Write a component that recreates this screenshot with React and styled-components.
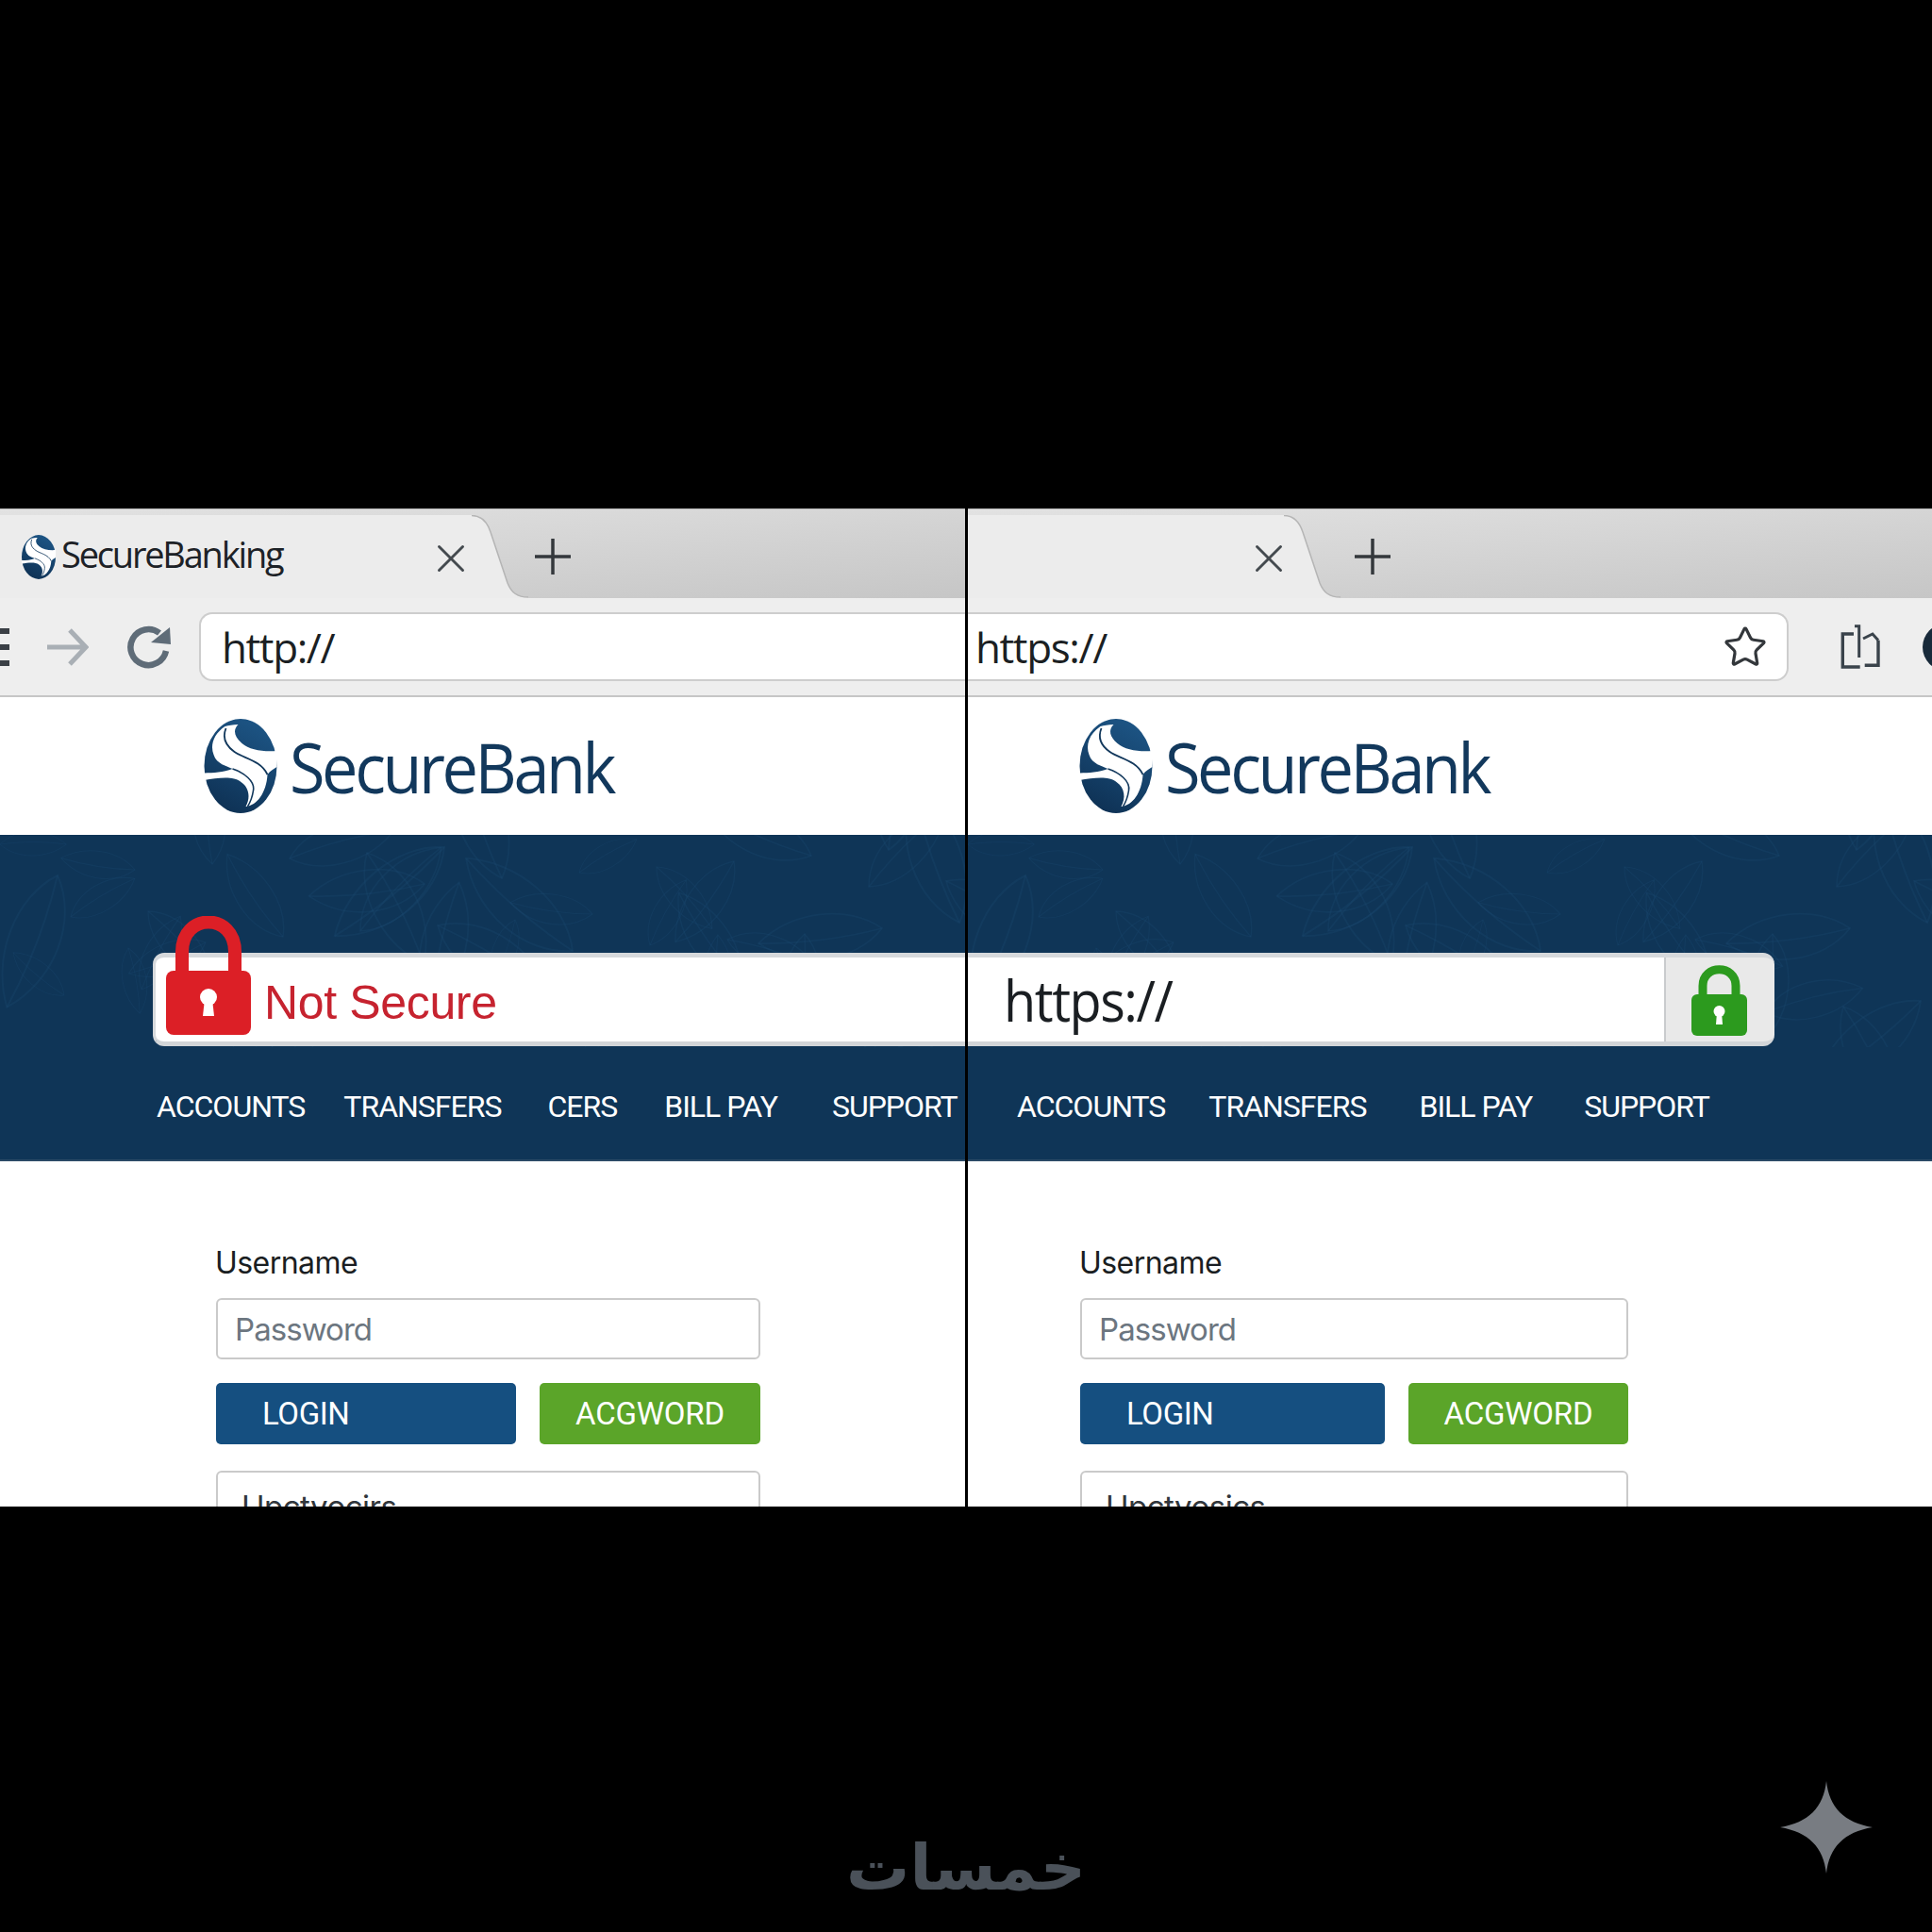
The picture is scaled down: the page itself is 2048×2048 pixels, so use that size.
import React from "react";
import styled, { createGlobalStyle } from "styled-components";
import { Star, X } from "lucide-react";

const GlobalStyle = createGlobalStyle`
  html, body {
    margin: 0;
    background: #000;
  }
  * {
    box-sizing: border-box;
  }
`;

const Page = styled.div`
  width: 2048px;
  height: 2048px;
  background: #000;
  padding-top: 539px;
  overflow: hidden;
`;

const Comparison = styled.div`
  display: grid;
  grid-template-columns: 1023px 1022px;
  column-gap: 3px;
  height: 1058px;
`;

const Pane = styled.section`
  display: flex;
  flex-direction: column;
  background: #fff;
  overflow: hidden;
  min-width: 0;
`;

const TabStrip = styled.div`
  display: flex;
  align-items: flex-end;
  height: 95px;
  flex: none;
  background: linear-gradient(175deg, #e2e2e2 0%, #d6d6d6 45%, #c6c6c6 100%);
  border-top: 1px solid #b9b9b9;
`;

const Tab = styled.div`
  display: flex;
  align-items: center;
  flex: none;
  width: ${props => props.$width}px;
  height: 88px;
  padding-left: 23px;
  background: #ececec;
`;

const TabLabel = styled.span`
  margin: -7px 0 0 6px;
  font: 400 38px "Open Sans", sans-serif;
  letter-spacing: -2.2px;
  color: #1d2227;
  white-space: nowrap;
`;

const Close = styled(X)`
  flex: none;
  margin-left: auto;
  margin-right: ${props => props.$right}px;
  margin-top: 4px;
  color: #444a4f;
`;

const TabEdge = styled.svg`
  flex: none;
  display: block;
`;

const PlusIcon = styled.svg`
  flex: none;
  align-self: center;
  margin-left: ${props => props.$left}px;
  margin-top: 6px;
`;

const Toolbar = styled.div`
  display: flex;
  align-items: center;
  flex: none;
  height: 105px;
  background: #eeeeee;
  border-bottom: 2px solid #c6c6c6;
`;

const Burger = styled.div`
  flex: none;
  width: 10px;
  height: 40px;
  background: repeating-linear-gradient(#3a3f45 0 6px, transparent 6px 17px);
`;

const NavIcon = styled.svg`
  flex: none;
  margin-left: ${props => props.$left}px;
`;

const UrlBar = styled.div`
  display: flex;
  align-items: center;
  flex: ${props => (props.$open ? "1" : "none")};
  width: ${props => (props.$width ? `${props.$width}px` : "auto")};
  height: 73px;
  margin-left: ${props => props.$left}px;
  padding-left: ${props => props.$pad}px;
  padding-right: 20px;
  background: #fff;
  border: 2px solid #cdcdcd;
  border-left: ${props => (props.$open ? "2px solid #cdcdcd" : "none")};
  border-right: ${props => (props.$open ? "none" : "2px solid #cdcdcd")};
  border-radius: ${props => (props.$open ? "14px 0 0 14px" : "0 14px 14px 0")};
`;

const UrlText = styled.span`
  font: 400 44px "Open Sans", sans-serif;
  letter-spacing: -1.4px;
  color: #1b1f23;
`;

const StarIcon = styled(Star)`
  margin-left: auto;
  color: #33373b;
`;

const Avatar = styled.div`
  flex: none;
  width: 50px;
  height: 50px;
  margin-left: 44px;
  border-radius: 50%;
  background: #182a3a;
`;

const BrandRow = styled.div`
  display: flex;
  align-items: center;
  flex: none;
  height: 146px;
  padding-left: ${props => props.$left}px;
  background: #fff;
`;

const BrandName = styled.span`
  margin-left: 13px;
  font: 400 74px "Open Sans", sans-serif;
  letter-spacing: -3.7px;
  color: #12385c;
  transform: scaleX(0.925);
  transform-origin: left center;
`;

const Band = styled.div`
  position: relative;
  display: flex;
  flex-direction: column;
  flex: none;
  height: 346px;
  padding-top: 125px;
  background: #0f3557;
  border-bottom: 2px solid #2b4a66;
`;

const BandTexture = styled.svg`
  position: absolute;
  top: 0;
  left: 0;
`;

const SecurityBar = styled.div`
  position: relative;
  display: flex;
  align-items: center;
  flex: none;
  height: 99px;
  margin-left: ${props => props.$left}px;
  width: ${props => props.$width}px;
  background: ${props => (props.$trailing ? "#e9e9e9" : "#fff")};
  border-top: 5px solid #d6d9dc;
  border-bottom: 5px solid #d2d5d8;
  border-left: ${props => (props.$trailing ? "none" : "3px solid #d6d9dc")};
  border-radius: ${props => (props.$trailing ? "0 12px 12px 0" : "12px 0 0 12px")};
`;

const BarLock = styled.svg`
  flex: none;
  align-self: flex-end;
  margin-left: 11px;
  margin-bottom: 7px;
`;

const Warning = styled.span`
  margin-left: 14px;
  margin-top: 6px;
  font: 400 50px "Liberation Sans", sans-serif;
  letter-spacing: -0.35px;
  color: #c6232f;
`;

const SecureField = styled.div`
  display: flex;
  align-items: center;
  flex: none;
  width: 740px;
  height: 100%;
  padding-left: 38px;
  background: #fff;
  border-right: 2px solid #c9cbcd;
`;

const SecureUrl = styled.span`
  font: 400 60px "Open Sans", sans-serif;
  letter-spacing: -1.6px;
  color: #1a1e22;
  transform: scaleX(0.93);
  transform-origin: left center;
`;

const LockCell = styled.div`
  display: flex;
  align-items: center;
  justify-content: center;
  flex: 1;
  height: 100%;
  padding-right: 2px;
`;

const NavRow = styled.nav`
  display: flex;
  align-items: center;
  flex: 1;
  padding-left: ${props => props.$left}px;
  padding-top: 7px;
`;

const NavLink = styled.span`
  margin-left: ${props => props.$gap}px;
  font: 400 32px Roboto, sans-serif;
  letter-spacing: -1px;
  color: #fff;
  white-space: nowrap;
`;

const Form = styled.div`
  display: flex;
  flex-direction: column;
  width: ${props => props.$width}px;
  margin-left: ${props => props.$left}px;
  padding-top: 88px;
`;

const FieldLabel = styled.label`
  height: 40px;
  margin-left: -1px;
  font: 400 32px Inter, sans-serif;
  letter-spacing: -0.55px;
  line-height: 40px;
  color: #1a1e22;
`;

const Field = styled.input`
  height: 65px;
  margin-top: 17px;
  padding: 0 18px;
  background: #fff;
  border: 2px solid #cacaca;
  border-radius: 6px;
  font: 400 33px Inter, sans-serif;
  letter-spacing: -0.95px;

  &::placeholder {
    color: #6c7680;
    opacity: 1;
  }
`;

const ButtonRow = styled.div`
  display: flex;
  gap: 25px;
  margin-top: 25px;
`;

const LoginButton = styled.div`
  flex: 1;
  height: 65px;
  padding-left: 49px;
  background: #154f80;
  border-radius: 5px;
  font: 400 33px/66px Roboto, sans-serif;
  letter-spacing: -0.4px;
  color: #fff;
`;

const WordButton = styled.div`
  flex: none;
  width: ${props => props.$width}px;
  height: 65px;
  text-align: center;
  background: #5ba529;
  border-radius: 5px;
  font: 400 33px/66px Roboto, sans-serif;
  letter-spacing: -0.2px;
  color: #fff;
`;

const StackedField = styled.div`
  height: 70px;
  margin-top: 28px;
  padding: 16px 0 0 25px;
  background: #fff;
  border: 2px solid #cacaca;
  border-radius: 6px;
  font: 400 33px/40px Inter, sans-serif;
  letter-spacing: -0.5px;
  color: #30363b;
`;

const Footer = styled.footer`
  display: grid;
  grid-template-columns: 1fr auto 1fr;
  height: 451px;
`;

const Wordmark = styled.div`
  grid-column: 2;
  align-self: end;
  margin-bottom: 34px;
  font: 700 67px/1 "DejaVu Sans", sans-serif;
  color: #4a5159;
`;

const Spark = styled.svg`
  grid-column: 3;
  justify-self: end;
  margin: 291px 63px 0 0;
`;

const LogoMark = ({ width, height, id }) => (
  <svg width={width} height={height} viewBox="0 0 77 100" style={{ flex: "none" }}>
    <defs>
      <linearGradient id={id} x1="0.7" y1="0" x2="0.3" y2="1">
        <stop offset="0" stopColor="#1d5585" />
        <stop offset="1" stopColor="#0e3154" />
      </linearGradient>
    </defs>
    <ellipse cx="38.5" cy="50" rx="38.5" ry="50" fill={`url(#${id})`} />
    <path
      d="M22 8C10 16 6 28 10 38C13 48 24 50 30 53C20 57 10 57 0 57.5L0 65C14 63 30 60 39 67C48 73 49 84 44 93C56 92 66 78 67 59C70 55 74 53 77 51L77 34C62 35 48 33 40 26C32 19 30 12 36 6C30 6 26 7 22 8Z"
      fill="#fff"
    />
    <path
      d="M23 10C19 20 22 28 32 35C42 42 60 44 67 59"
      fill="none"
      stroke="#12385c"
      strokeWidth="1.8"
    />
    <path
      d="M30 53C42 57 54 66 52 76C51 83 49 88 46 93"
      fill="none"
      stroke="#12385c"
      strokeWidth="1.6"
    />
  </svg>
);

// faint leaf shapes behind the band, only there as texture
const leaves = Array.from({ length: 46 }, (_, i) => ({
  x: (i * 157) % 1024,
  y: 10 + (i * 71) % 210,
  r: (i * 47) % 360,
  s: 0.8 + ((i * 13) % 10) / 10,
}));

const Texture = () => (
  <BandTexture width="1024" height="225" viewBox="0 0 1024 225">
    {leaves.map((leaf, i) => (
      <g
        key={i}
        transform={`translate(${leaf.x} ${leaf.y}) rotate(${leaf.r}) scale(${leaf.s})`}
        fill="none"
        stroke="#1c4a72"
        strokeOpacity="0.28"
        strokeWidth="1.2"
      >
        <path d="M0 0C22 -22 62 -22 88 0C62 20 22 20 0 0Z" />
        <path d="M0 0C30 -4 58 -4 88 0" />
      </g>
    ))}
  </BandTexture>
);

const TabCurve = () => (
  <TabEdge width="60" height="88" viewBox="0 0 60 88">
    <path d="M0 0C10 0 16 6 20 18L38 72C42 82 48 87 60 87V88H0Z" fill="#ececec" />
    <path d="M0 .5C10 .5 16 6 20 18L38 72C42 82 48 87 60 87" fill="none" stroke="#b5b5b5" strokeWidth="1.5" />
  </TabEdge>
);

const Plus = ({ left }) => (
  <PlusIcon $left={left} width="40" height="40" viewBox="0 0 40 40">
    <path d="M20 1V39M1 20H39" stroke="#34383c" strokeWidth="3.5" />
  </PlusIcon>
);

const LeftNav = ["ACCOUNTS", "TRANSFERS", "CERS", "BILL PAY", "SUPPORT"];
const LeftGaps = [0, 41, 49, 50, 58];
const RightNav = ["ACCOUNTS", "TRANSFERS", "BILL PAY", "SUPPORT"];
const RightGaps = [0, 46, 56, 55];

const App = () => (
  <Page>
    <GlobalStyle />
    <Comparison>
      <Pane>
        <TabStrip>
          <Tab $width={500}>
            <LogoMark id="tab-left" width={36} height={47} />
            <TabLabel>SecureBanking</TabLabel>
            <Close $right={-3} size={50} strokeWidth={1.4} />
          </Tab>
          <TabCurve />
          <Plus left={6} />
        </TabStrip>
        <Toolbar>
          <Burger />
          <NavIcon $left={40} width="44" height="40" viewBox="0 0 44 40">
            <path d="M0 20H41M24 2L41 20L24 38" fill="none" stroke="#a9afb5" strokeWidth="5" />
          </NavIcon>
          <NavIcon $left={41} width="48" height="48" viewBox="0 0 48 48">
            <path d="M41 28A19 19 0 1 1 34 9" fill="none" stroke="#5f6c78" strokeWidth="6.5" />
            <path d="M45 3L46 21L25 19Z" fill="#5f6c78" />
          </NavIcon>
          <UrlBar $open $left={28} $pad={22}>
            <UrlText>http://</UrlText>
          </UrlBar>
        </Toolbar>
        <BrandRow $left={216}>
          <LogoMark id="brand-left" width={78} height={100} />
          <BrandName>SecureBank</BrandName>
        </BrandRow>
        <Band>
          <Texture />
          <SecurityBar $left={162} $width={861}>
            <BarLock width="90" height="126" viewBox="0 0 90 126">
              <path d="M17 64V38C17 -4 73 -4 73 38V64" fill="none" stroke="#dc1f26" strokeWidth="14" />
              <rect y="58" width="90" height="68" rx="8" fill="#dc1f26" />
              <circle cx="45" cy="86" r="9" fill="#fff" />
              <path d="M41 88H49L51 106H39Z" fill="#fff" />
            </BarLock>
            <Warning>Not Secure</Warning>
          </SecurityBar>
          <NavRow $left={166}>
            {LeftNav.map((item, i) => (
              <NavLink key={item} $gap={LeftGaps[i]}>{item}</NavLink>
            ))}
          </NavRow>
        </Band>
        <Form $left={229} $width={577}>
          <FieldLabel>Username</FieldLabel>
          <Field placeholder="Password" readOnly />
          <ButtonRow>
            <LoginButton>LOGIN</LoginButton>
            <WordButton $width={234}>ACGWORD</WordButton>
          </ButtonRow>
          <StackedField>Upctyocirs</StackedField>
        </Form>
      </Pane>
      <Pane>
        <TabStrip>
          <Tab $width={335}>
            <Close $right={-9} size={50} strokeWidth={1.4} />
          </Tab>
          <TabCurve />
          <Plus left={14} />
        </TabStrip>
        <Toolbar>
          <UrlBar $left={0} $pad={8} $width={870}>
            <UrlText>https://</UrlText>
            <StarIcon size={48} strokeWidth={1.6} />
          </UrlBar>
          <NavIcon $left={54} width="44" height="48" viewBox="0 0 44 48">
            <path d="M15 10H3.300000000000001V45H21.7M26.7 43.3H41V16.7" fill="none" stroke="#3a434b" strokeWidth="3.4" />
            <path d="M16 1.7H20.7V35M25 15L35 10L41 16.7" fill="none" stroke="#3a434b" strokeWidth="3" />
          </NavIcon>
          <Avatar />
        </Toolbar>
        <BrandRow $left={118}>
          <LogoMark id="brand-right" width={78} height={100} />
          <BrandName>SecureBank</BrandName>
        </BrandRow>
        <Band>
          <Texture />
          <SecurityBar $trailing $left={0} $width={855}>
            <SecureField>
              <SecureUrl>https://</SecureUrl>
            </SecureField>
            <LockCell>
              <svg width="59" height="76" viewBox="0 0 59 76">
                <path d="M12 38V23C12 0 47 0 47 23V38" fill="none" stroke="#2c9a1e" strokeWidth="9" />
                <rect y="32" width="59" height="44" rx="6" fill="#2c9a1e" />
                <circle cx="29.5" cy="50" r="6" fill="#fff" />
                <path d="M27 51H32L33 64H26Z" fill="#fff" />
              </svg>
            </LockCell>
          </SecurityBar>
          <NavRow $left={52}>
            {RightNav.map((item, i) => (
              <NavLink key={item} $gap={RightGaps[i]}>{item}</NavLink>
            ))}
          </NavRow>
        </Band>
        <Form $left={119} $width={581}>
          <FieldLabel>Username</FieldLabel>
          <Field placeholder="Password" readOnly />
          <ButtonRow>
            <LoginButton>LOGIN</LoginButton>
            <WordButton $width={233}>ACGWORD</WordButton>
          </ButtonRow>
          <StackedField>Upctyosics</StackedField>
        </Form>
      </Pane>
    </Comparison>
    <Footer>
      <Wordmark>خمسات</Wordmark>
      <Spark width="98" height="98" viewBox="0 0 98 98">
        <path d="M49 0C52 28 68 44 98 49C68 54 52 70 49 98C46 70 30 54 0 49C30 44 46 28 49 0Z" fill="#787c82" />
      </Spark>
    </Footer>
  </Page>
);

export default App;
